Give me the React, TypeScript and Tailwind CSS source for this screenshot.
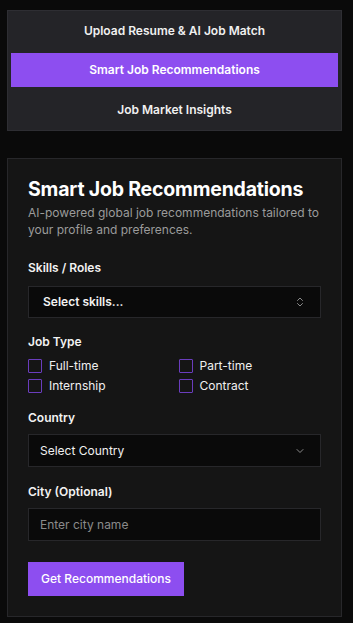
import { ChevronDown, ChevronsUpDown } from 'lucide-react'
import clsx from 'clsx'

const tabs = ['Upload Resume & AI Job Match', 'Smart Job Recommendations', 'Job Market Insights']

const jobTypes = ['Full-time', 'Part-time', 'Internship', 'Contract']

export default function App() {
  const label = clsx('text-[12px] leading-[18px] font-semibold text-[#f2f2f2]')
  const field = clsx(
    'flex items-center justify-between w-full border border-[#27272a] bg-[#0a0a0a] text-[12px]'
  )

  return (
    <div className="min-h-[623px] w-[353px] bg-[#0a0a0a] pl-[7px] pr-[11px] pt-[10px] font-['Inter',sans-serif]">
      {/* tabs */}
      <div className="flex flex-col gap-[5px] border border-[#2e2e33] bg-[#242428] p-[3px]">
        {tabs.map((t, i) => (
          <div
            key={t}
            className={clsx(
              'h-[34px] flex items-center justify-center text-[12px] font-semibold text-[#f0f0f0]',
              i === 1 && 'bg-[#8d4ef0] text-white',
              i === 2 && 'mt-[1px]'
            )}
          >
            {t}
          </div>
        ))}
      </div>

      {/* card */}
      <div className="mt-[27px] border border-[#27272a] bg-[#151515] px-[20px] pt-[16px] pb-[20px]">
        <h2 className="text-[19.5px] leading-[28px] font-bold text-white tracking-[-0.2px]">
          Smart Job Recommendations
        </h2>
        <p className="mt-[1px] text-[12px] leading-[17px] text-[#9b9b9b]">
          AI-powered global job recommendations tailored to your profile and preferences.
        </p>

        <div className={clsx(label, 'mt-[21px]')}>Skills / Roles</div>
        <div className={clsx(field, 'mt-[9px] h-[32px] pl-[14px] pr-[14px]')}>
          <span className="font-semibold text-[#f2f2f2]">Select skills...</span>
          <ChevronsUpDown size={12} className="text-[#8a8a8a]" />
        </div>

        <div className={clsx(label, 'mt-[15px]')}>Job Type</div>
        <div className="mt-[6px] grid grid-cols-2 gap-x-2 gap-y-[2px]">
          {jobTypes.map(j => (
            <label key={j} className="flex items-center gap-[7px] h-[18px]">
              <span className="w-[14px] h-[14px] border-[1.5px] border-[#6a3dbd] rounded-[1px]" />
              <span className="text-[12px] text-[#f0f0f0]">{j}</span>
            </label>
          ))}
        </div>

        <div className={clsx(label, 'mt-[14px]')}>Country</div>
        <div className={clsx(field, 'mt-[7px] h-[33px] pl-[11px] pr-[14px]')}>
          <span className="text-[#f0f0f0]">Select Country</span>
          <ChevronDown size={12} className="text-[#8a8a8a]" />
        </div>

        <div className={clsx(label, 'mt-[16px]')}>City (Optional)</div>
        <div className={clsx(field, 'mt-[7px] h-[33px] pl-[11px]')}>
          <span className="text-[#8a8a8a]">Enter city name</span>
        </div>

        <button className="mt-[21px] h-[34px] px-[13px] bg-[#8d4ef0] text-[12px] font-medium text-white">
          Get Recommendations
        </button>
      </div>
    </div>
  )
}
